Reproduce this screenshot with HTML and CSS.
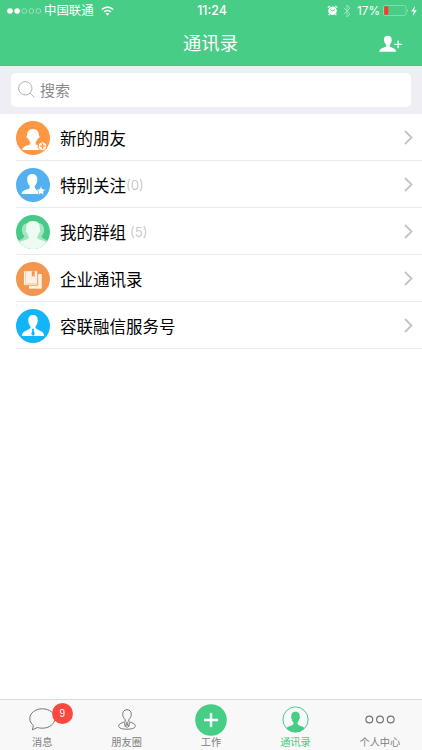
FILE: index.html
```html
<!DOCTYPE html>
<html lang="zh-CN">
  <head>
    <meta charset="utf-8">
    <title>通讯录</title>
    <link rel="stylesheet" href="styles.css">
  </head>

  <body>

    <div class="header">
      <div class="status">
        <div class="status-left">
          <svg class="signal" width="36" height="8" viewBox="0 0 36 8">
            <g fill="#fff"><circle cx="3" cy="4" r="2.8"/><circle cx="10.1" cy="4" r="2.8"/></g>
            <g fill="none" stroke="#b5ebcb" stroke-width=".7"><circle cx="17.2" cy="4" r="2.4"/><circle cx="24.3" cy="4" r="2.4"/><circle cx="31.4" cy="4" r="2.4"/></g>
          </svg>
          <span class="carrier">中国联通</span>
          <svg class="wifi" width="13" height="10" viewBox="0 0 13 10">
            <g fill="none" stroke="#fff" stroke-width="1.6"><path d="M.8 3.5Q6.5-1.3 12.2 3.5"/><path d="M3 6Q6.5 3 10 6"/></g>
            <path d="M4.6 7.5Q6.5 6 8.4 7.5L6.5 9.6z" fill="#fff"/>
          </svg>
        </div>
        <span class="time">11:24</span>
        <div class="status-right">
          <svg width="11" height="11" viewBox="0 0 11 11">
            <circle cx="5.5" cy="5.8" r="4.3" fill="#fff"/>
            <path d="M.8 2.6L2.8 .9M8.2 .9L10.2 2.6M2.5 9L1.7 10.2M8.5 9L9.3 10.2" stroke="#fff" stroke-width="1.2"/>
            <path d="M3.4 4.1L5.4 6.1L7.8 4.5" fill="none" stroke="#47cd86"/>
          </svg>
          <svg class="bluetooth" width="8" height="14" viewBox="0 0 8 14">
            <path d="M.8 3.8L7 10L4 13V1L7 4L.8 10.2" fill="none" stroke="#a7e7c2" stroke-width=".9"/>
          </svg>
          <span class="percent">17%</span>
          <svg class="battery" width="26" height="11" viewBox="0 0 26 11">
            <rect x=".5" y=".5" width="22.5" height="10" rx="1.5" fill="none" stroke="#8fe0b4" stroke-width=".8"/>
            <path d="M1.2 1.3H5.3V9.7H1.2z" fill="#f8392f"/>
            <path d="M24 3.7Q25.5 5.5 24 7.3z" fill="#b5ebcb"/>
          </svg>
          <svg class="bolt" width="6" height="10" viewBox="0 0 6 10"><path d="M4 0L.2 5.5H2.7L1.7 10L5.8 4.2H3.2z" fill="#fff"/></svg>
        </div>
      </div>
      <div class="nav">
        <h1>通讯录</h1>
        <svg class="add" width="24" height="18" viewBox="0 0 24 18">
          <path d="M8.8.8C6 .8 4.8 2.6 5 5C5.1 7.4 6 8.6 7 9.6V11.4C5.5 12.8 .3 12.8.3 16.8H17.2C17.2 12.8 12 12.8 10.8 11.4V9.6C12 8.5 12.7 7 12.7 5C12.8 2.6 11.6.8 8.8.8z" fill="#fff"/>
          <path d="M15.2 9.3H23M19.1 5.4V13.2" stroke="#fff" stroke-width="1.3"/>
        </svg>
      </div>
    </div>

    <div class="search">
      <div class="search-box">
        <svg width="17" height="17" viewBox="0 0 17 17"><g fill="none" stroke="#aaa" stroke-width=".9"><circle cx="7.3" cy="7.3" r="6.7"/><path d="M12.1 12.1L16.2 16.2"/></g></svg>
        <span>搜索</span>
      </div>
    </div>

    <ul class="list">
      <li>
        <svg class="avatar" viewBox="0 0 34 34">
          <circle cx="17" cy="17" r="17" fill="#fd9744"/>
          <path d="M17 8C12.7 8 11 11 11.2 14L10.2 16.2L12 17.5C12.5 19 13.3 20.2 14.3 21V23C12.5 25 6.5 24.5 6.3 29H27.7C27.5 24.5 21.5 25 19.7 23V21C20.7 20.2 21.5 19 22 17.5L23.8 16.2L22.8 14C23 11 21.3 8 17 8z" fill="#fff"/>
          <circle cx="26.5" cy="25.2" r="4.3" fill="#fff" stroke="#fd9744" stroke-width="1"/>
          <path d="M23.7 25.2H29.3M26.5 22.4V28" stroke="#fd9744" stroke-width="1.3"/>
        </svg>
        <span class="name">新的朋友</span>
        <svg class="arrow" viewBox="0 0 9 15"><path d="M1 1L7.5 7.5L1 14"/></svg>
      </li>
      <li>
        <svg class="avatar" viewBox="0 0 34 34">
          <circle cx="17" cy="17" r="17" fill="#54b1ef"/>
          <path d="M16.2 6C12.5 6 11 8.5 11.2 11.5C11.3 14.5 12.3 16.5 13.7 17.7V20C12 22 5.8 21.5 5.5 26H27C26.8 21.5 20.5 22 18.8 20V17.7C20.2 16.5 21.2 14.5 21.3 11.5C21.4 8.5 20 6 16.2 6z" fill="#fff"/>
          <path d="M25 17.8L26.4 21.1L29.9 21.4L27.2 23.7L28 27.2L25 25.3L22 27.2L22.8 23.7L20.1 21.4L23.6 21.1z" fill="#fff" stroke="#54b1ef" stroke-width=".7"/>
        </svg>
        <span class="name">特别关注</span><span class="count">(0)</span>
        <svg class="arrow" viewBox="0 0 9 15"><path d="M1 1L7.5 7.5L1 14"/></svg>
      </li>
      <li>
        <svg class="avatar" viewBox="0 0 34 34">
          <defs><clipPath id="group"><circle cx="17" cy="17" r="17"/></clipPath></defs>
          <g clip-path="url(#group)">
            <path d="M0 0H34V34H0z" fill="#46ca85"/>
            <path d="M12.5 8C7 8 5.2 12 6.2 17C6.4 19 7.5 20 8.3 21C8.3 24 2 25 0 27V34H34V27C32 25 25.7 24 25.7 21C26.5 20 27.6 19 27.8 17C28.8 12 27 8 21.5 8z" fill="#a2e5c2"/>
            <path d="M17 6C11.5 6 9.8 9.5 10.2 14L9.7 16.5L11.3 18.5C11.7 20.5 12.2 21 13 22C13 25.5 4 24.5 2.5 29V34H31.5V29C30 24.5 21 25.5 21 22C21.8 21 22.3 20.5 22.7 18.5L24.3 16.5L23.8 14C24.2 9.5 22.5 6 17 6z" fill="#edfbf3"/>
          </g>
        </svg>
        <span class="name">我的群组</span><span class="count spaced">(5)</span>
        <svg class="arrow" viewBox="0 0 9 15"><path d="M1 1L7.5 7.5L1 14"/></svg>
      </li>
      <li>
        <svg class="avatar" viewBox="0 0 34 34">
          <circle cx="17" cy="17" r="17" fill="#f29650"/>
          <path d="M13 12H25.8V26.7H13z" fill="#fff0e3"/>
          <path d="M8.7 8.7H20.5Q21.7 8.7 21.7 10V23.3H8.7Q7.5 23.3 7.5 22V10Q7.5 8.7 8.7 8.7z" fill="#fff0e3" stroke="#f29650" stroke-width=".9"/>
          <path d="M9.5 9.5V21.3M9.5 21.4H21" fill="none" stroke="#f8c39b" stroke-width=".6"/>
          <path d="M15.8 9.3H18.7V15L17.3 13.8L15.8 15z" fill="#f29650"/>
        </svg>
        <span class="name">企业通讯录</span>
        <svg class="arrow" viewBox="0 0 9 15"><path d="M1 1L7.5 7.5L1 14"/></svg>
      </li>
      <li>
        <svg class="avatar" viewBox="0 0 34 34">
          <circle cx="17" cy="17" r="17" fill="#12b5f7"/>
          <path d="M17 6C13.5 6 12 8.7 12.3 11.8C12.5 14.5 13.5 16.5 14.5 17.3V19C12.5 21.5 6 21.5 5.8 27H28.2C28 21.5 21.5 21.5 19.5 19V17.3C20.5 16.5 21.5 14.5 21.7 11.8C22 8.7 20.5 6 17 6z" fill="#fff"/>
          <path d="M15.8 19.8H18.2L17.7 21.5L18.8 25L17 27L15.2 25L16.3 21.5z" fill="#12b5f7"/>
        </svg>
        <span class="name">容联融信服务号</span>
        <svg class="arrow" viewBox="0 0 9 15"><path d="M1 1L7.5 7.5L1 14"/></svg>
      </li>
    </ul>

    <div class="tabbar">
      <a class="tab">
        <div class="icon">
          <svg width="27" height="23" viewBox="0 0 27 23"><path d="M13.3.8C6.4.8.8 5 .8 10.4C.8 13.4 2.2 15.9 4.4 17.6L3.3 21.9L8.4 19.5C9.9 20 11.6 20.2 13.3 20.2C20.3 20.2 25.9 15.9 25.9 10.4C25.9 5 20.3.8 13.3.8z" fill="none" stroke="#777"/></svg>
          <span class="badge">9</span>
        </div>
        <span>消息</span>
      </a>
      <a class="tab">
        <div class="icon">
          <svg width="18" height="21" viewBox="0 0 18 21">
            <g fill="none" stroke="#777"><path d="M9 .7C6 .7 4.5 2.9 4.7 5.7C4.9 8.1 6.4 9.8 7.3 10.8V12.3C5 14 .7 14 .7 17.2C.7 19.2 4.5 20.2 9 20.2S17.3 19.2 17.3 17.2C17.3 14 13 14 10.7 12.3V10.8C11.6 9.8 13.1 8.1 13.3 5.7C13.5 2.9 12 .7 9 .7z"/><path d="M6.2 13.2L7.2 17.8L9 14.5L10.8 17.8L11.8 13.2M8.2 13.2H9.8V15L10.3 17.4L9 18.6L7.7 17.4L8.2 15z" stroke-width=".8"/></g>
          </svg>
        </div>
        <span>朋友圈</span>
      </a>
      <a class="tab">
        <div class="icon">
          <svg width="32" height="32" viewBox="0 0 32 32"><circle cx="16" cy="16" r="15.8" fill="#46cd86"/><path d="M9 16H23M16 9V23" stroke="#fff" stroke-width="2.4"/></svg>
        </div>
        <span>工作</span>
      </a>
      <a class="tab active">
        <div class="icon">
          <svg width="27" height="27" viewBox="0 0 27 27">
            <path d="M13.5 5.8C10.1 5.8 9.2 8 9.4 10.5L9 12L9.9 13.3C10.2 15 10.8 15.7 11.4 16.3V18.3C10.2 20.2 5.3 20 4.5 22.5Q8 26.2 13.5 26.2T22.5 22.5C21.7 20 16.8 20.2 15.6 18.3V16.3C16.2 15.7 16.8 15 17.1 13.3L18 12L17.6 10.5C17.8 8 16.9 5.8 13.5 5.8z" fill="#46cd86"/>
            <circle cx="13.5" cy="13.5" r="12.6" fill="none" stroke="#46cd86" stroke-width="1"/>
          </svg>
        </div>
        <span>通讯录</span>
      </a>
      <a class="tab">
        <div class="icon">
          <svg width="30" height="9" viewBox="0 0 30 9"><g fill="none" stroke="#777" stroke-width="1.2"><circle cx="4.3" cy="4.5" r="3.4"/><circle cx="15" cy="4.5" r="3.4"/><circle cx="25.7" cy="4.5" r="3.4"/></g></svg>
        </div>
        <span>个人中心</span>
      </a>
    </div>

  </body>
</html>
```
FILE: styles.css
```css
* { box-sizing: border-box; }
body {
  margin: 0;
  height: 750px;
  display: flex;
  flex-direction: column;
  overflow: hidden;
  background: #fff;
  color: #000;
  font-family: "Liberation Sans", "Noto Sans CJK SC", sans-serif;
}
svg { display: block; flex: none; }
.header { height: 66px; background: #47cd86; color: #fff; border-bottom: 1px solid #58bd87; }
.status {
  height: 21px;
  display: grid;
  grid-template-columns: 1fr auto 1fr;
  align-items: center;
  padding: 0 5px 0 7px;
  font-size: 12px;
}
.status-left, .status-right { display: flex; align-items: center; }
.status-right { justify-content: flex-end; }
.carrier { margin-left: 1px; padding-top: 1px; font-size: 12.4px; line-height: 20px; }
.wifi { margin-left: 7px; }
.time { font-family: Inter, sans-serif; font-weight: 500; font-size: 12.4px; }
.bluetooth { margin-left: 5px; }
.percent { font-family: Inter, sans-serif; margin-left: 6px; font-size: 11.8px; }
.battery { margin-left: 3px; }
.bolt { margin-left: 2px; }
.nav {
  height: 45px;
  display: grid;
  grid-template-columns: 1fr auto 1fr;
  align-items: center;
  padding: 0 19px 0 18px;
}
.nav h1 { grid-column: 2; margin: 0; padding-top: 1px; font-size: 18.3px; font-weight: 400; line-height: 44px; }
.add { justify-self: end; }
.search { height: 48px; padding: 7px 11px; background: #efeef4; }
.search-box {
  height: 34px;
  display: flex;
  align-items: center;
  gap: 5px;
  padding: 0 7px 1px;
  border-radius: 5px;
  background: #fff;
  color: #8a8a8a;
  font-size: 15px;
}
.list { flex: 1; margin: 0; padding: 0 0 0 16px; list-style: none; }
.list li {
  height: 47px;
  display: flex;
  align-items: center;
  padding: 1px 9px 0 0;
  border-bottom: 1px solid #ebebed;
}
.avatar { width: 34px; height: 34px; margin-right: 10px; }
.name { font-size: 16.5px; }
.count { color: #c0c0c0; font-family: Inter, sans-serif; font-size: 13.5px; font-weight: 300; }
.spaced { margin-left: 4px; }
.arrow { width: 9px; height: 15px; margin-left: auto; fill: none; stroke: #c4c4c8; stroke-width: 1.8; }
.tabbar {
  height: 51px;
  display: flex;
  border-top: 1px solid #d9d9d9;
  background: #f8f8f8;
}
.tab {
  flex: 1;
  display: flex;
  flex-direction: column;
  align-items: center;
  color: #808080;
  font-size: 10.2px;
  line-height: 12px;
}
.active { color: #46cd86; }
.icon {
  position: relative;
  height: 37px;
  display: flex;
  align-items: center;
  padding-top: 2px;
}
.badge {
  position: absolute;
  left: 23px;
  top: 3px;
  width: 21px;
  height: 21px;
  border-radius: 50%;
  background: #fc483f;
  color: #fff;
  font-size: 10px;
  line-height: 21px;
  text-align: center;
}
```
